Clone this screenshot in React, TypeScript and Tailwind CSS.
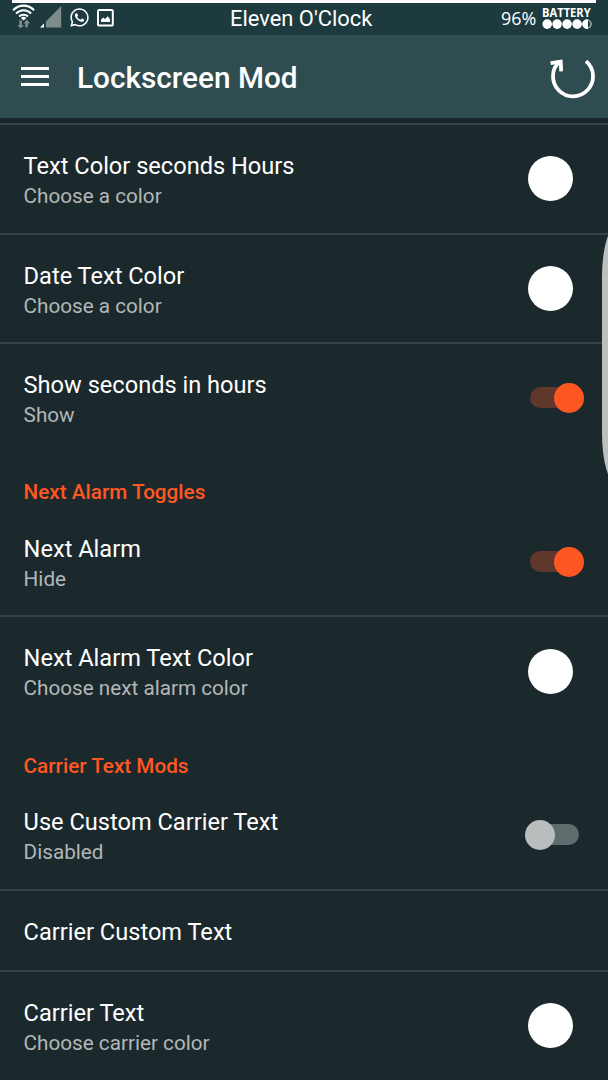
import { useState } from 'react'
import { FaWhatsapp } from 'react-icons/fa'

type ItemType = {
  title: string
  desc?: string
  control?: 'color' | 'switch'
  checked?: boolean
}

type SectionType = {
  name?: string
  items: ItemType[]
}

const SECTIONS: SectionType[] = [
  {
    items: [
      { title: 'Text Color seconds Hours', desc: 'Choose a color', control: 'color' },
      { title: 'Date Text Color', desc: 'Choose a color', control: 'color' },
      { title: 'Show seconds in hours', desc: 'Show', control: 'switch', checked: true }
    ]
  },
  {
    name: 'Next Alarm Toggles',
    items: [
      { title: 'Next Alarm', desc: 'Hide', control: 'switch', checked: true },
      { title: 'Next Alarm Text Color', desc: 'Choose next alarm color', control: 'color' }
    ]
  },
  {
    name: 'Carrier Text Mods',
    items: [
      { title: 'Use Custom Carrier Text', desc: 'Disabled', control: 'switch', checked: false },
      { title: 'Carrier Custom Text' },
      { title: 'Carrier Text', desc: 'Choose carrier color', control: 'color' }
    ]
  }
]

const WifiIcon = () => (
  <svg width="24" height="26" viewBox="0 0 24 26" fill="none">
    <g stroke="#fff" strokeWidth="2.1">
      <path d="M1.1 7.2C7.1 1.1 16.1 1.1 22.1 7.2" />
      <path d="M4.1 10.5C8.4 6.2 14.8 6.2 19.1 10.5" />
      <path d="M7.2 13.6C9.6 11.2 13.6 11.2 16 13.6" />
    </g>
    <path d="M8.9 14.9Q11.6 12.7 14.3 14.9L11.6 17.6Z" fill="#fff" />
    <path d="M7.3 17.3h2.6v4.6H12L8.6 25.6 5.4 21.9h1.9zM13.3 24.3h2.6v-3.9h2.2L14.9 16.6 11.6 20.4h1.7z" fill="#7d8c8d" />
  </svg>
)

const SignalIcon = () => (
  <svg width="22" height="24" viewBox="0 0 22 24">
    <path d="M21.2 1V22.5H5.9V16.5z" fill="#7e8b8b" />
    <path d="M4 18.4V22.5H0z" fill="#fff" />
  </svg>
)

const PictureIcon = () => (
  <svg width="18" height="18" viewBox="0 0 18 18">
    <rect x="1" y="1" width="14.8" height="15.6" rx="1.2" fill="none" stroke="#fff" strokeWidth="2" />
    <path d="M4 13V10.4L6.2 8.4 8 9.9 10.8 7.3 13 10.2V13z" fill="#fff" />
  </svg>
)

const RefreshIcon = () => (
  <svg className="overflow-visible" width="46" height="42" viewBox="0 0 46 42" fill="none" stroke="#fff" strokeWidth="3.8">
    <path d="M36 5.1A20 20 0 1 1 9.8 5.3" />
    <path d="M.6 7.2L10.7 5.6 11.2 15.4" />
  </svg>
)

const StatusBar = () => (
  <div className="flex h-[35px] shrink-0 flex-col bg-[#1d3a3e] text-white">
    <div className="ml-3 h-[3px] w-[584px] bg-[#fafafa]" />
    <div className="flex h-8 items-start">
      <div className="flex w-[230px] items-start pl-3">
        <WifiIcon />
        <div className="ml-1 mt-0.5"><SignalIcon /></div>
        <FaWhatsapp className="ml-[7px] mt-[4px]" size={21} />
        <div className="ml-[7px] mt-[6px]"><PictureIcon /></div>
      </div>
      <span className="w-[271px] whitespace-nowrap text-[21.9px] leading-[32px]">Eleven O'Clock</span>
      <span className="w-[41px] font-['Open_Sans',sans-serif] text-[17.9px] leading-[31px]">96%</span>
      <div className="flex w-[50px] flex-col pt-[3px]">
        <span className="origin-left scale-x-[0.93] font-['Open_Sans',sans-serif] text-[12px] font-bold leading-[13px]">BATTERY</span>
        <svg width="50" height="10" viewBox="0 0 50 10" fill="#fff">
          {[5.2, 15.1, 25.1, 35.1].map((cx) => <circle key={cx} cx={cx} cy="5.1" r="4.8" />)}
          <path d="M46 .4H45A4.7 4.7 0 0 0 45 9.8H46z" />
          <circle cx="44.9" cy="5.1" r="4.2" fill="none" stroke="#fff" strokeWidth=".9" />
        </svg>
      </div>
    </div>
  </div>
)

const Header = () => (
  <header className="flex h-[83px] shrink-0 items-center bg-[#2f4c50] pl-[21.4px] text-white">
    <button className="flex w-7 flex-col gap-[5px]" aria-label="Menu">
      <span className="h-[3px] w-full bg-white" />
      <span className="h-[3px] w-full bg-white" />
      <span className="h-[3px] w-full bg-white" />
    </button>
    <h1 className="ml-[27.6px] w-[473px] pt-0.5 text-[29.75px] font-medium leading-9">Lockscreen Mod</h1>
    <button aria-label="Refresh"><RefreshIcon /></button>
  </header>
)

const Switch = ({ initial }: { initial: boolean }) => {
  const [on, setOn] = useState(initial)
  return (
    <button
      role="switch"
      aria-checked={on}
      onClick={() => setOn(!on)}
      className={`mr-[24px] flex h-[30px] w-[59.5px] items-center ${on ? 'justify-end' : 'justify-start'}`}
    >
      {on ? (
        <>
          <span className="-mr-[25px] h-[21px] w-[49px] rounded-full bg-[#5f372b]" />
          <span className="z-10 size-[30px] rounded-full bg-[#ff5722]" />
        </>
      ) : (
        <>
          <span className="z-10 size-[30px] rounded-full bg-[#babdbe]" />
          <span className="-ml-[25px] h-[21px] w-[49px] rounded-full bg-[#5f6c6d]" />
        </>
      )}
    </button>
  )
}

const Item = ({ item, divider }: { item: ItemType; divider: boolean }) => (
  <div className={`flex items-center justify-between pl-[23.6px] ${divider ? 'border-b-2 border-[#334347]' : ''} ${item.desc ? (divider ? 'h-[109.6px]' : 'h-[107.6px]') : 'h-[81px]'}`}>
    <div className={`flex flex-col ${item.desc ? 'pt-[3.4px]' : 'pt-[4px]'}`}>
      <span className="text-[23.6px] leading-[31px] text-white">{item.title}</span>
      {item.desc && <span className="text-[20.7px] leading-[28px] text-[#b2b7b8]">{item.desc}</span>}
    </div>
    {item.control === 'color' && <button className="mr-[35px] size-[45px] rounded-full bg-white" aria-label={item.title} />}
    {item.control === 'switch' && <Switch initial={!!item.checked} />}
  </div>
)

const App = () => {
  return (
    <div className="relative flex h-[1080px] w-[608px] flex-col overflow-hidden bg-[#1c292c] font-[Roboto,sans-serif]">
      <StatusBar />
      <Header />
      <div className="h-[7px] shrink-0 border-b-2 border-[#334347] bg-[#19262a]" />
      <main className="flex flex-col">
        {SECTIONS.map((section, i) => (
          <section key={i}>
            {section.name && <h2 className="h-[56px] pl-[23.6px] pt-[26.7px] text-[20.7px] font-medium leading-[28px] text-[#ff5722]">{section.name}</h2>}
            {section.items.map((item, j) => (
              <Item key={item.title} item={item} divider={j < section.items.length - 1} />
            ))}
          </section>
        ))}
      </main>
      {/* edge panel handle */}
      <div className="absolute left-[601.5px] top-[227px] h-[256px] w-7 rounded-[14px/50px] bg-[#bcbfbf]" />
    </div>
  )
}

export default App
